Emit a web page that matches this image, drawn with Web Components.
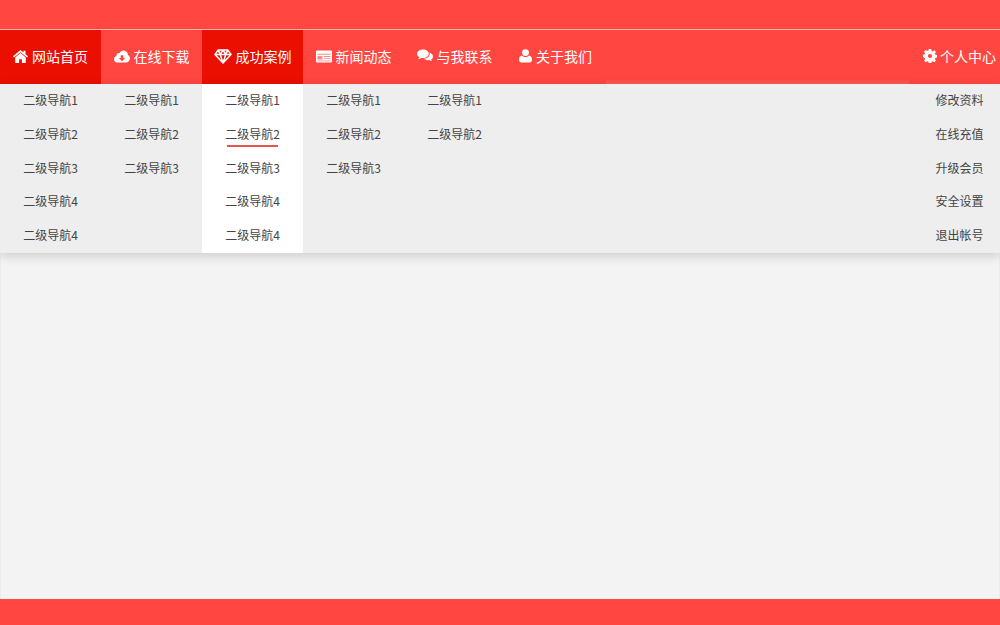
<!DOCTYPE html>
<html lang="zh">
<head>
<meta charset="utf-8">
<title>nav</title>
<style>
  html, body { margin: 0; height: 100%; }
  body { background: #f3f3f3; font-family: "Noto Sans CJK SC", "Liberation Sans", sans-serif; }
</style>
</head>
<body>
<nav-page>
  <nav-bar>
    <nav-item icon="home" active>网站首页</nav-item>
    <nav-item icon="cloud">在线下载</nav-item>
    <nav-item icon="diamond" active>成功案例</nav-item>
    <nav-item icon="news">新闻动态</nav-item>
    <nav-item icon="chat">与我联系</nav-item>
    <nav-item icon="user">关于我们</nav-item>
    <nav-item icon="gear" slot="right" class="right">个人中心</nav-item>
  </nav-bar>
  <sub-panel>
    <sub-col items="二级导航1,二级导航2,二级导航3,二级导航4,二级导航4"></sub-col>
    <sub-col items="二级导航1,二级导航2,二级导航3"></sub-col>
    <sub-col items="二级导航1,二级导航2,二级导航3,二级导航4,二级导航4" current="1"></sub-col>
    <sub-col items="二级导航1,二级导航2,二级导航3"></sub-col>
    <sub-col items="二级导航1,二级导航2"></sub-col>
    <sub-col slot="right" narrow items="修改资料,在线充值,升级会员,安全设置,退出帐号"></sub-col>
  </sub-panel>
</nav-page>

<script>
const ICONS = {
  home: '<svg width="15" height="13" viewBox="0 0 15 13"><path fill="#fff" d="M7.500 0 0 6.300l1 1.200L7.500 2.200 14 7.500l1-1.200-2.500-2.100V.8h-2v1.700z"/><path fill="#fff" d="M7.500 3 2.200 7.400V13h3.900V9.200h2.800V13h3.900V7.400z"/></svg>',
  cloud: '<svg width="16" height="13" viewBox="0 0 16 13"><path fill="#fff" d="M3.600 12.600C1.600 12.600 0 11.100 0 9.200c0-1.500 1-2.800 2.400-3.200C2.400 3.900 4 2.600 5.600 3.100 6.400 1.300 8 .3 9.700.4c2.500.1 4.300 2.100 4.200 4.500 1.200.6 2.100 2 2.100 3.400 0 2.400-1.900 4.300-4.200 4.300z"/><path fill="#ff4641" d="M6.700 5.200h2.600v2.900h1.900L8 11.200 4.800 8.100h1.900z"/></svg>',
  diamond: '<svg width="18" height="15" viewBox="0 0 18 15"><path fill="none" stroke="#fff" stroke-width="1.500" stroke-linejoin="round" d="M4.300 1h9.400L17 5.400 9 14 1 5.400zM1 5.400h16M6.200 5.400 9 14l2.800-8.600M4.300 1l1.900 4.400L9 1l2.800 4.400L13.700 1"/></svg>',
  news: '<svg width="16" height="13" viewBox="0 0 16 13"><path fill="#fff" d="M1 .5h14a1 1 0 0 1 1 1v10a1 1 0 0 1-1 1H1a1 1 0 0 1-1-1v-10a1 1 0 0 1 1-1z"/><path fill="#ff8a86" d="M1.500 3.800h13v.9h-13zM7.800 6h6.700v.9H7.800zM7.800 8.200h6.700v.9H7.800zM1.500 10.400h13v.8h-13zM1.500 6h5v3.600h-5z"/></svg>',
  chat: '<svg width="16" height="14" viewBox="0 0 16 14"><path fill="#fff" d="M6 .5c3.200 0 5.800 1.900 5.800 4.300S9.200 9.100 6 9.100c-.6 0-1.200-.1-1.700-.2C3.400 9.600 2.300 10 1.200 10.100c.5-.6 1-1.300 1.100-2C.9 7.300 0 6.100 0 4.800 0 2.400 2.700.5 6 .5z"/><path fill="#fff" d="M12.700 3.700c1.900.6 3.300 2 3.300 3.700 0 1.200-.7 2.300-1.900 3 .1.700.5 1.300 1 1.900-1-.1-2-.5-2.800-1.200-.4.1-.9.1-1.300.1-1.700 0-3.200-.6-4.100-1.500 3.300-.1 6.300-2.100 5.800-6z"/></svg>',
  user: '<svg width="13" height="14" viewBox="0 0 13 14"><circle fill="#fff" cx="6.500" cy="3.600" r="3.400"/><path fill="#fff" d="M3 6.500C4 7.500 5.200 8 6.500 8s2.500-.5 3.500-1.500c1.800.3 3 1.700 3 4.200 0 1.700-1 2.800-2.500 2.800h-8C1 13.500 0 12.400 0 10.700c0-2.500 1.200-3.900 3-4.200z"/></svg>',
  gear: '<svg width="14" height="14" viewBox="0 0 14 14"><path fill="#fff" fill-rule="evenodd" d="M5.800 0h2.400l.4 1.900 1.100.5 1.600-1.100 1.700 1.700-1.100 1.600.5 1.100 1.600.4v2.400l-1.600.4-.5 1.100 1.100 1.600-1.700 1.700-1.600-1.100-1.100.5-.4 1.800H5.800l-.4-1.800-1.100-.5-1.600 1.100-1.700-1.700 1.100-1.600-.5-1.100L0 8.100V5.700l1.600-.4.500-1.100L1 2.600l1.700-1.700 1.600 1.100 1.100-.5zM7 4.900a2.100 2.100 0 1 0 0 4.200 2.100 2.100 0 0 0 0-4.200z"/></svg>'
};

class NavPage extends HTMLElement {
  constructor() {
    super();
    this.attachShadow({ mode: 'open' });
    this.shadowRoot.innerHTML = `
      <style>
        :host {
          display: flex;
          flex-direction: column;
          height: 625px;
          overflow: hidden;
        }
        .top {
          height: 29px;
          background: #ff4641;
          border-bottom: 1px solid #ffb5b3;
        }
        .main {
          flex: 1;
          border-left: 1px solid #ebebeb;
          border-right: 1px solid #ebebeb;
        }
        .bottom {
          height: 26px;
          background: #ff4641;
        }
      </style>
      <div class="top"></div>
      <slot></slot>
      <div class="main"></div>
      <div class="bottom"></div>
    `;
  }
}

class NavBar extends HTMLElement {
  constructor() {
    super();
    this.attachShadow({ mode: 'open' });
    this.shadowRoot.innerHTML = `
      <style>
        :host {
          display: flex;
          height: 54px;
          background: #ff4641;
        }
        .side { display: flex; }
        .fill {
          flex: 1;
          background: linear-gradient(transparent 49px, #ff5a55);
        }
      </style>
      <div class="side"><slot></slot></div>
      <div class="fill"></div>
      <div class="side"><slot name="right"></slot></div>
    `;
  }
}

class NavItem extends HTMLElement {
  constructor() {
    super();
    this.attachShadow({ mode: 'open' });
    const icon = ICONS[this.getAttribute('icon')] || '';
    this.shadowRoot.innerHTML = `
      <style>
        :host {
          display: flex;
          align-items: center;
          justify-content: center;
          gap: 4px;
          box-sizing: border-box;
          width: 101px;
          padding-bottom: 2px;
          color: #fff;
          font-size: 14px;
        }
        :host([active]) { background: #ea0f00; }
        :host(.right) { width: 91px; padding-left: 10px; gap: 3px; }
        svg { display: block; }
      </style>
      ${icon}<span><slot></slot></span>
    `;
  }
}

class SubPanel extends HTMLElement {
  constructor() {
    super();
    this.attachShadow({ mode: 'open' });
    this.shadowRoot.innerHTML = `
      <style>
        :host {
          display: flex;
          justify-content: space-between;
          height: 169px;
          background: #eeeeee;
          box-shadow: 0 3px 10px rgba(0, 0, 0, .16);
          position: relative;
        }
        .side { display: flex; }
      </style>
      <div class="side"><slot></slot></div>
      <div class="side"><slot name="right"></slot></div>
    `;
  }
}

class SubCol extends HTMLElement {
  constructor() {
    super();
    this.attachShadow({ mode: 'open' });
    const current = this.getAttribute('current');
    const rows = this.getAttribute('items').split(',').map((text, i) => `
      <div class="row"><span class="${String(i) === current ? 'on' : ''}">${text}</span></div>
    `).join('');
    this.shadowRoot.innerHTML = `
      <style>
        :host {
          display: block;
          width: 101px;
          color: #444;
          font-size: 12px;
        }
        :host([current]) { background: #fff; }
        :host([narrow]) { width: 91px; padding-left: 10px; box-sizing: border-box; }
        .row {
          box-sizing: border-box;
          height: 33.7px;
          padding-bottom: 2px;
          display: flex;
          align-items: center;
          justify-content: center;
        }
        span { position: relative; }
        .on::after {
          content: '';
          position: absolute;
          left: 2px;
          right: 2px;
          bottom: -5px;
          height: 2px;
          background: #e8524f;
        }
      </style>
      ${rows}
    `;
  }
}

customElements.define('nav-page', NavPage);
customElements.define('nav-bar', NavBar);
customElements.define('nav-item', NavItem);
customElements.define('sub-panel', SubPanel);
customElements.define('sub-col', SubCol);
</script>
</body>
</html>
